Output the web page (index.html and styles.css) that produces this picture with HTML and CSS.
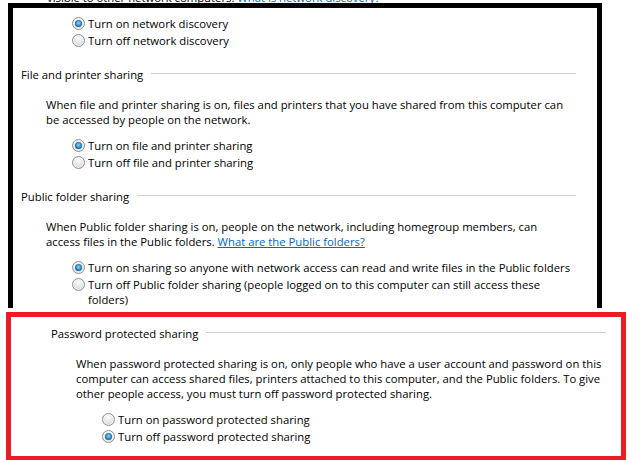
FILE: index.html
```html
<!DOCTYPE html>
<html>
<head>
<meta charset="utf-8">
<link rel="stylesheet" href="styles.css">
</head>
<body>
<div class="cut"><span class="cut-text">visible to other network computers. <a class="link" href="#">What is network discovery?</a></span></div>

<div class="frame frame-black">
  <section class="sec sec-top">
    <div class="options">
      <div class="opt"><span class="radio on"></span><span class="lbl">Turn on network discovery</span></div>
      <div class="opt"><span class="radio"></span><span class="lbl">Turn off network discovery</span></div>
    </div>
  </section>

  <section class="sec">
    <div class="head"><span class="head-text">File and printer sharing</span><span class="rule"></span></div>
    <p class="desc">When file and printer sharing is on, files and printers that you have shared from this computer can<br>be accessed by people on the network.</p>
    <div class="options">
      <div class="opt"><span class="radio on"></span><span class="lbl">Turn on file and printer sharing</span></div>
      <div class="opt"><span class="radio"></span><span class="lbl">Turn off file and printer sharing</span></div>
    </div>
  </section>

  <section class="sec">
    <div class="head"><span class="head-text">Public folder sharing</span><span class="rule"></span></div>
    <p class="desc">When Public folder sharing is on, people on the network, including homegroup members, can<br>access files in the Public folders. <a class="link" href="#">What are the Public folders?</a></p>
    <div class="options">
      <div class="opt"><span class="radio on"></span><span class="lbl">Turn on sharing so anyone with network access can read and write files in the Public folders</span></div>
      <div class="opt"><span class="radio"></span><span class="lbl">Turn off Public folder sharing (people logged on to this computer can still access these<br>folders)</span></div>
    </div>
  </section>
</div>

<div class="frame frame-red">
  <section class="sec">
    <div class="head"><span class="head-text">Password protected sharing</span><span class="rule"></span></div>
    <p class="desc">When password protected sharing is on, only people who have a user account and password on this<br>computer can access shared files, printers attached to this computer, and the Public folders. To give<br>other people access, you must turn off password protected sharing.</p>
    <div class="options">
      <div class="opt"><span class="radio"></span><span class="lbl">Turn on password protected sharing</span></div>
      <div class="opt"><span class="radio on"></span><span class="lbl">Turn off password protected sharing</span></div>
    </div>
  </section>
</div>
</body>
</html>
```

FILE: styles.css
```css
html, body {
  margin: 0;
  padding: 0;
  background: #ffffff;
}

body {
  font-family: "Open Sans", "Noto Sans", sans-serif;
  font-size: 11.3px;
  line-height: 15px;
  color: #000000;
  overflow: hidden;
  height: 460px;
}

.cut {
  height: 3px;
  overflow: hidden;
  padding-left: 47px;
}

.cut-text {
  display: block;
  margin-top: -10px;
  line-height: 15px;
  white-space: nowrap;
}

.link {
  color: #0066cc;
  text-decoration: underline;
}

.frame {
  box-sizing: border-box;
}

.frame-black {
  width: 594px;
  margin-left: 8px;
  border: 5px solid #000000;
  border-bottom: none;
  padding: 8px 0 1px 8px;
}

.frame-red {
  width: 620px;
  margin-left: 6px;
  margin-top: 4px;
  border: 5px solid #ed1c24;
  padding: 9px 0 12px 40px;
}

.sec {
  width: 555px;
}

.sec + .sec {
  margin-top: 19px;
}

.head {
  display: flex;
  align-items: center;
  height: 15px;
}

.head-text {
  white-space: nowrap;
}

.rule {
  flex: 1;
  height: 1px;
  background: #cfcfcf;
  margin-left: 8px;
  margin-top: -2px;
}

.desc {
  margin: 15px 0 0 25px;
  width: 545px;
  white-space: nowrap;
}

.options {
  margin: 11px 0 0 51px;
  display: flex;
  flex-direction: column;
  gap: 2px;
}

.sec-top .options {
  margin-top: 0;
}

.opt {
  display: flex;
  align-items: flex-start;
  gap: 3px;
}

.lbl {
  width: 500px;
  white-space: nowrap;
}

.radio {
  flex: none;
  position: relative;
  width: 13px;
  height: 13px;
  margin-top: 1px;
  box-sizing: border-box;
  border-radius: 50%;
  border: 1px solid #8d8f90;
  background: radial-gradient(circle at 50% 30%, #fbfbfb 0, #e4e4e4 55%, #cbcbcb 100%);
  box-shadow: inset 0 0 0 1px rgba(255, 255, 255, 0.6);
}

.radio.on::after {
  content: "";
  position: absolute;
  left: 2px;
  top: 2px;
  width: 7px;
  height: 7px;
  border-radius: 50%;
  background: radial-gradient(circle at 50% 45%, #8fe2ff 0, #2f8fd0 45%, #114c80 80%, #0b335a 100%);
}
```
